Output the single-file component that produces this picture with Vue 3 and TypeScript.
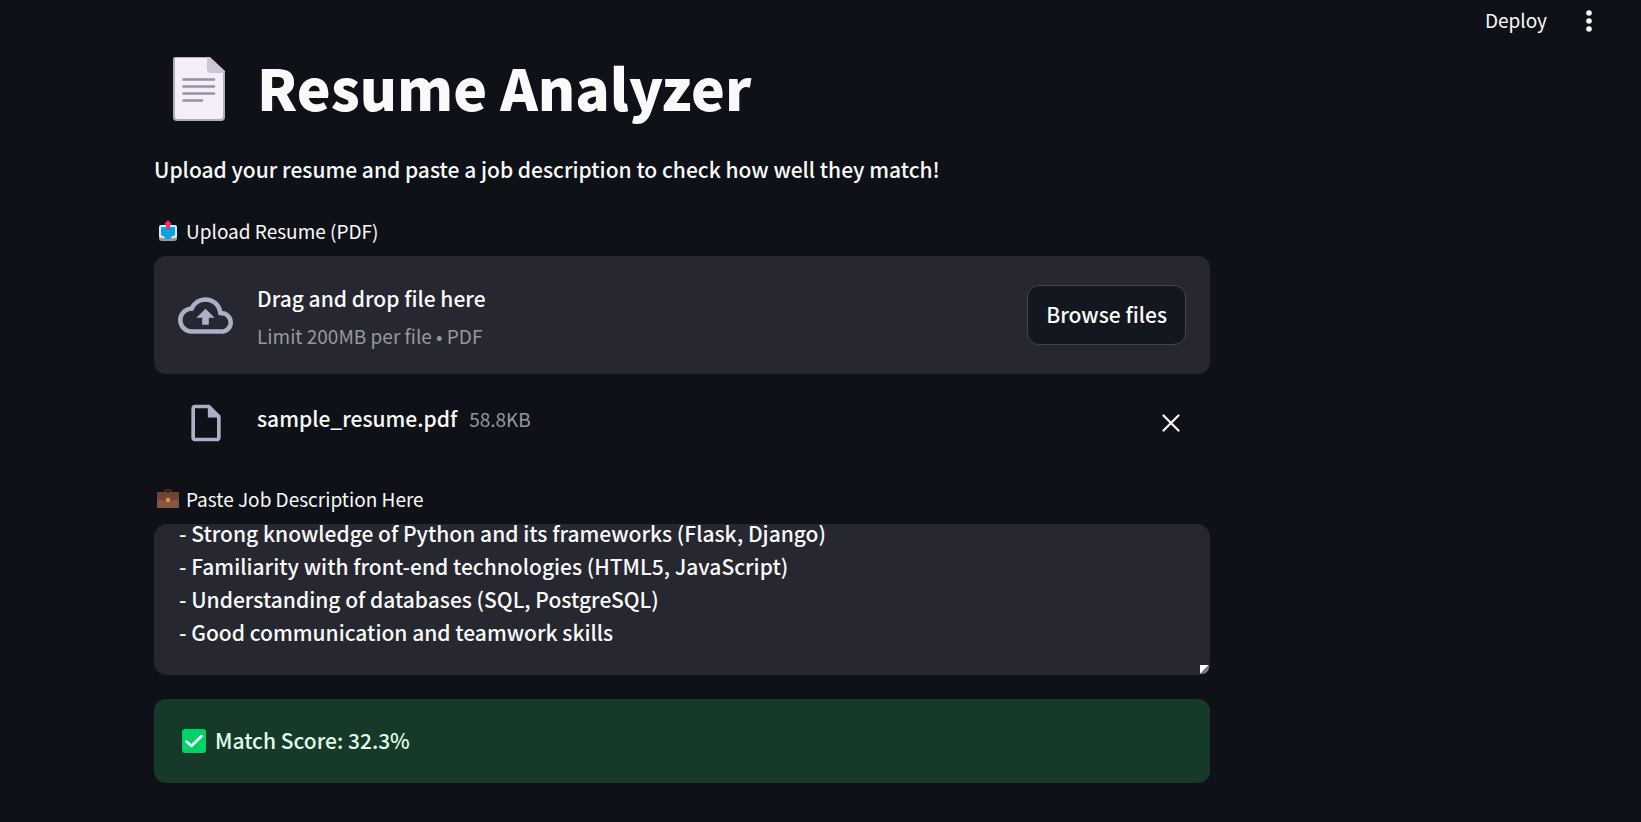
<script setup lang="ts">
import { nextTick, onMounted, ref } from 'vue'

const fileName = ref<string>('sample_resume.pdf')
const fileSize = ref<string>('58.8KB')
const matchScore = ref<number>(32.3)
const jobDescription = ref<string>(
  [
    '- Strong knowledge of Python and its frameworks (Flask, Django)',
    '- Familiarity with front-end technologies (HTML5, JavaScript)',
    '- Understanding of databases (SQL, PostgreSQL)',
    '- Good communication and teamwork skills',
  ].join('\n'),
)
const jobInput = ref<HTMLTextAreaElement | null>(null)

onMounted(async () => {
  await nextTick()
  if (jobInput.value) jobInput.value.scrollTop = jobInput.value.scrollHeight
})
</script>

<template>
  <div class="app">
    <header class="toolbar">
      <button class="deploy" type="button">Deploy</button>
      <button class="menu" type="button" aria-label="Main menu">
        <svg width="6" height="22" viewBox="0 0 6 22" fill="currentColor" aria-hidden="true">
          <circle cx="3" cy="3" r="2.8" />
          <circle cx="3" cy="11" r="2.8" />
          <circle cx="3" cy="19" r="2.8" />
        </svg>
      </button>
    </header>

    <main class="content">
      <h1 class="title">
        <svg class="title-icon" width="52" height="64" viewBox="0 0 52 64" aria-hidden="true">
          <path d="M2 0H36L52 15V60a4 4 0 0 1-4 4H4a4 4 0 0 1-4-4V2a2 2 0 0 1 2-2Z" fill="#b4acbc" />
          <path d="M3 1H35L50 15V59a3 3 0 0 1-3 3H5a3 3 0 0 1-3-3V2a1 1 0 0 1 1-1Z" fill="#f3eef8" />
          <path d="M35 0H37L52 14V16H38a4 4 0 0 1-4-4V0Z" fill="#cdc4d6" />
          <g stroke="#998ea4" stroke-width="2.6" stroke-linecap="round">
            <path d="M10.500 22.500H41M10.500 29.500H41M10.500 36.500H41M10.500 43.500H29" />
          </g>
        </svg>
        <span class="title-text">Resume Analyzer</span>
      </h1>

      <p class="intro">Upload your resume and paste a job description to check how well they match!</p>

      <label class="field-label" for="browse">
        <svg class="label-icon" width="22" height="22" viewBox="0 0 22 22" aria-hidden="true">
          <rect x="2" y="5" width="18" height="16" rx="3" fill="#9b9b9b" />
          <rect x="2" y="5" width="18" height="13" rx="2.500" fill="#e6e6e6" />
          <path d="M4 7H18V15L15 16.500L13 19H9L7 16.500L4 15Z" fill="#00a6ed" />
          <path d="M11 0L15 4.600H13V10H9V4.600H7Z" fill="#f92f60" />
        </svg>
        <span>Upload Resume (PDF)</span>
      </label>

      <section class="dropzone">
        <svg class="cloud" width="55" height="55" viewBox="0 0 24 24" fill="currentColor" aria-hidden="true">
          <path d="M19.350 10.040A7.490 7.490 0 0 0 12 4C9.110 4 6.600 5.640 5.350 8.040A5.994 5.994 0 0 0 0 14c0 3.310 2.690 6 6 6h13c2.760 0 5-2.240 5-5 0-2.640-2.050-4.780-4.650-4.960zM19 18H6c-2.210 0-4-1.790-4-4 0-2.050 1.530-3.760 3.560-3.970l1.070-.11.5-.95A5.469 5.469 0 0 1 12 6c2.620 0 4.880 1.860 5.390 4.430l.3 1.500 1.530.11A2.980 2.980 0 0 1 22 15c0 1.650-1.350 3-3 3zM8 13h2.550v3h2.900v-3H16l-4-4-4 4z" />
        </svg>
        <div class="drop-text">
          <span class="drop-main">Drag and drop file here</span>
          <span class="drop-hint">Limit 200MB per file • PDF</span>
        </div>
        <button id="browse" class="browse" type="button">Browse files</button>
      </section>

      <div class="file-row">
        <svg class="file-icon" width="44" height="44" viewBox="0 0 24 24" fill="currentColor" aria-hidden="true">
          <path d="M14 2H6c-1.100 0-1.990.9-1.990 2L4 20c0 1.100.890 2 1.990 2H18c1.100 0 2-.9 2-2V8l-6-6zM6 20V4h7v5h5v11H6z" />
        </svg>
        <div class="file-info">
          <span class="file-name">{{ fileName }}</span>
          <span class="file-size">{{ fileSize }}</span>
        </div>
        <button class="remove" type="button" aria-label="Remove file">
          <svg width="18" height="18" viewBox="0 0 18 18" fill="none" stroke="currentColor" stroke-width="2.200" stroke-linecap="round" aria-hidden="true">
            <path d="M1.500 1.500L16.500 16.500M16.500 1.500L1.500 16.500" />
          </svg>
        </button>
      </div>

      <label class="field-label" for="job">
        <svg class="label-icon" width="22" height="22" viewBox="0 0 22 22" aria-hidden="true">
          <path d="M8 5V3.500Q8 2 9.500 2H12.500Q14 2 14 3.500V5" fill="none" stroke="#5b3b2e" stroke-width="1.500" />
          <rect x="0" y="4" width="22" height="16" rx="1.500" fill="#8b5543" />
          <path d="M0 5.500Q0 4 1.500 4H20.500Q22 4 22 5.500V11Q11 14 0 11Z" fill="#6d4534" />
          <rect x="9" y="10" width="4" height="4" rx="0.800" fill="#e39340" />
        </svg>
        <span>Paste Job Description Here</span>
      </label>

      <div class="job-box">
        <textarea id="job" ref="jobInput" v-model="jobDescription" class="job-input" spellcheck="false"></textarea>
        <svg class="grip" width="9" height="9" viewBox="0 0 9 9" aria-hidden="true">
          <path d="M0 0H9L0 9Z" fill="#ffffff" />
          <path d="M9 0V2.500A6.500 6.500 0 0 1 2.500 9H0Z" fill="#77777d" />
        </svg>
      </div>

      <div class="result" role="status">
        <svg class="check" width="24" height="24" viewBox="0 0 24 24" aria-hidden="true">
          <rect width="24" height="24" rx="3" fill="#00d26a" />
          <path d="M4.500 12.500L9.500 17L19.500 7" fill="none" stroke="#ffffff" stroke-width="2.500" stroke-linecap="round" stroke-linejoin="round" />
        </svg>
        <span class="result-text">Match Score: {{ matchScore }}%</span>
      </div>
    </main>
  </div>
</template>

<style>
html,
body {
  background: #0e1117;
}
</style>

<style scoped>
.app {
  box-sizing: border-box;
  min-height: 100vh;
  background: #0e1117;
  color: #fafafa;
  font-family: 'Noto Sans CJK JP', 'Noto Sans', sans-serif;
  font-size: 21px;
  font-weight: 500;
  line-height: 33px;
}

button,
textarea {
  font-family: inherit;
  font-weight: inherit;
  color: inherit;
}

.toolbar {
  display: flex;
  justify-content: flex-end;
  align-items: center;
  gap: 39px;
  height: 42px;
  padding-right: 49px;
}

.deploy,
.menu,
.remove {
  display: flex;
  padding: 0;
  border: 0;
  background: none;
  cursor: pointer;
}

.deploy {
  padding-bottom: 2px;
  font-size: 19px;
  font-weight: 400;
  line-height: 24px;
}

.content {
  box-sizing: border-box;
  max-width: 1210px;
  padding: 0 0 36px 154px;
}

.title {
  display: flex;
  align-items: center;
  gap: 32px;
  margin: 0;
  padding-left: 19px;
  font-size: 57px;
  font-weight: 900;
  line-height: 88px;
}

.title-text {
  padding-bottom: 6px;
}

.intro {
  margin: 17px 0 33px;
}

.field-label {
  display: flex;
  align-items: center;
  gap: 7px;
  height: 24px;
  padding-left: 3px;
  margin-bottom: 13px;
  font-size: 19px;
  font-weight: 400;
  line-height: 24px;
}

.dropzone {
  display: flex;
  align-items: center;
  gap: 24px;
  padding: 22px 24px;
  border-radius: 12px;
  background: #262730;
}

.cloud,
.file-icon {
  flex: none;
  color: #abb0c6;
}

.drop-text {
  display: flex;
  flex: 1;
  flex-direction: column;
  gap: 4px;
  padding-top: 4px;
}

.drop-hint,
.file-size {
  color: #97989d;
  font-size: 19px;
  font-weight: 400;
}

.browse {
  height: 60px;
  padding: 0 18px 2px;
  border: 1px solid #41444c;
  border-radius: 12px;
  background: #131720;
  font-size: 21px;
  cursor: pointer;
}

.file-row {
  display: flex;
  align-items: center;
  gap: 29px;
  margin: 27px 0 42px;
  padding: 0 30px;
}

.file-info {
  display: flex;
  flex: 1;
  align-items: baseline;
  gap: 12px;
  padding-bottom: 10px;
}

.job-box {
  position: relative;
}

.job-input {
  display: block;
  box-sizing: border-box;
  width: 100%;
  height: 151px;
  padding: 18px 24px 25px;
  border: 1px solid #262730;
  border-radius: 12px;
  outline: 0;
  background: #262730;
  font-size: 21px;
  line-height: 33px;
  resize: none;
  scrollbar-width: none;
}

.grip {
  position: absolute;
  right: 1px;
  bottom: 1px;
}

.result {
  display: flex;
  align-items: center;
  gap: 9px;
  min-height: 84px;
  margin-top: 24px;
  padding: 0 28px;
  border-radius: 12px;
  background: #173928;
  color: #dffde9;
}

.result-text {
  padding-bottom: 2px;
}
</style>
